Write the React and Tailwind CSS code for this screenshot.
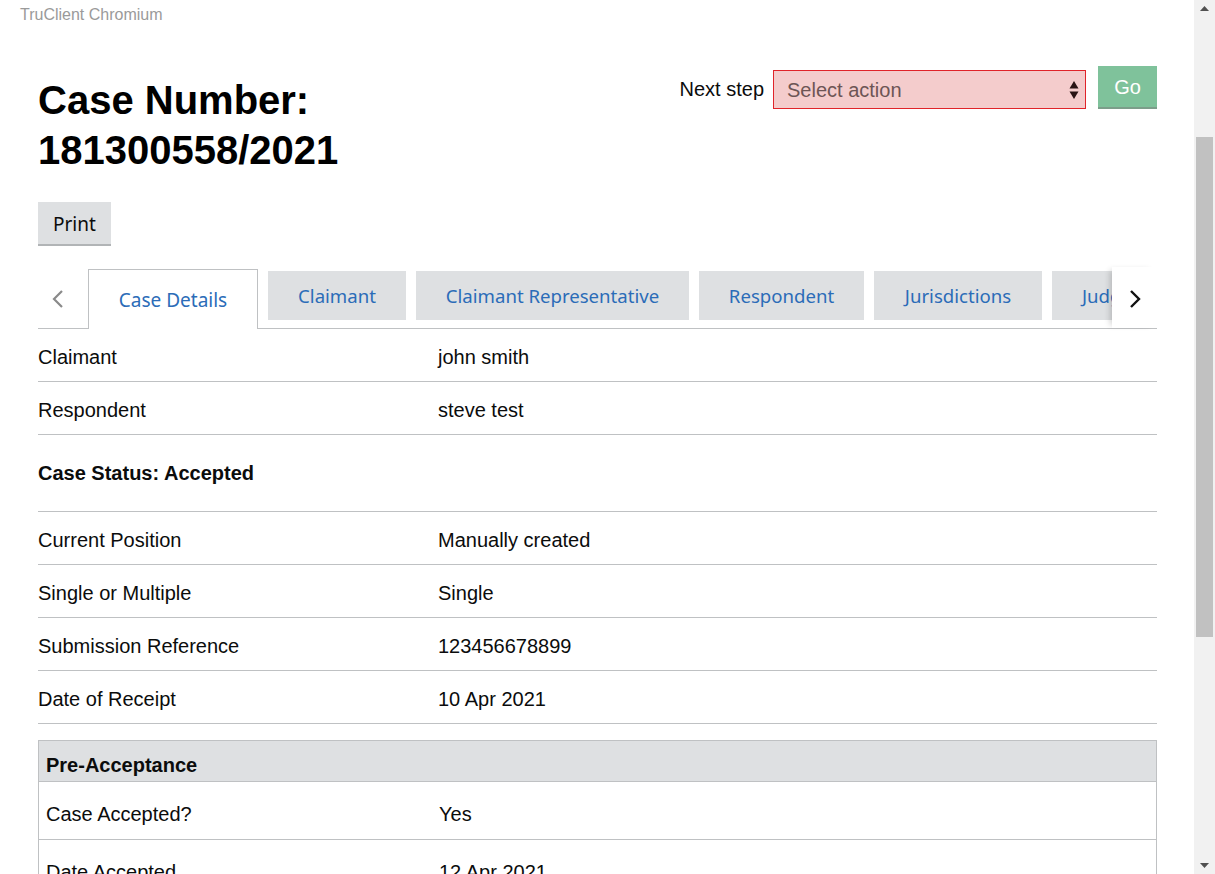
const detailRows = [
  ['Claimant', 'john smith'],
  ['Respondent', 'steve test'],
];

const positionRows = [
  ['Current Position', 'Manually created'],
  ['Single or Multiple', 'Single'],
  ['Submission Reference', '123456678899'],
  ['Date of Receipt', '10 Apr 2021'],
];

const tabs = [
  { name: 'Claimant', w: 'w-[138px] justify-center' },
  { name: 'Claimant Representative', w: 'w-[273px] justify-center' },
  { name: 'Respondent', w: 'w-[165px] justify-center' },
  { name: 'Jurisdictions', w: 'w-[168px] justify-center' },
  { name: 'Judgments', w: 'w-[150px] justify-start pl-[30px]' },
];

function Row({ label, value }) {
  return (
    <div className="grid grid-cols-[400px_1fr] h-[53px] pt-[4px] items-center border-b border-[#bfc1c3] text-[20px] leading-[23px] text-[#0b0c0c]">
      <div>{label}</div>
      <div>{value}</div>
    </div>
  );
}

export default function App() {
  return (
    <div className="h-[874px] w-[1215px] overflow-hidden flex bg-white font-['Liberation_Sans',Arial,sans-serif]">
      <div className="flex-1 min-w-0">
        {/* window title */}
        <div className="pl-[20px] pt-[5px] text-[16px] leading-[20px] text-[#9a9a9a]">TruClient Chromium</div>

        <div className="pl-[38px] pr-[37px]">
          {/* Header */}
          <div className="flex justify-between items-start pt-[41px]">
            <h1 className="mt-[9px] text-[40px] leading-[50px] font-bold text-black">
              Case Number:
              <br />
              181300558/2021
            </h1>

            <div className="flex items-start">
              <div className="mt-[4px] h-[38px] flex items-center text-[20px] text-[#0b0c0c]">Next step</div>
              <div className="ml-[9px] mt-[4px] w-[313px] h-[39px] flex items-center justify-between border border-[#e0242a] bg-[#f4cccc] pl-[13px] pr-[6px]">
                <span className="text-[20px] text-[#6d5555]">Select action</span>
                <svg width="10" height="20" viewBox="0 0 10 20">
                  <polygon points="5,1 9.5,8.5 0.5,8.5" fill="#2a1414" />
                  <polygon points="0.5,11.5 9.5,11.5 5,19" fill="#2a1414" />
                </svg>
              </div>
              <button className="ml-[12px] w-[59px] h-[43px] bg-[#7fc29b] border-b-2 border-[#7c9e8a] text-white text-[20px] flex items-center justify-center">
                Go
              </button>
            </div>
          </div>

          {/* Print */}
          <button className="mt-[27px] h-[44px] px-[15px] pt-[2px] bg-[#dee0e2] border-b-2 border-[#b1b4b6] text-[19px] text-[#0b0c0c] font-['Noto_Sans',sans-serif]">
            Print
          </button>

          {/* Tabs */}
          <div className="mt-[23px] h-[60px] flex shadow-[inset_0_-1px_0_#bfc1c3] font-['Noto_Sans',sans-serif]">
            <div className="w-[50px] h-[59px] flex items-center pl-[13px]">
              <svg width="14" height="20" viewBox="0 0 14 20">
                <polyline points="11,2 3,10 11,18" fill="none" stroke="#8a8a8a" strokeWidth="2.2" />
              </svg>
            </div>
            <div className="flex-1 min-w-0 overflow-hidden h-[60px]">
              <div className="flex items-start gap-[10px] w-max">
                <div className="h-[60px] w-[170px] bg-white border-t border-l border-r border-[#bfc1c3] flex items-center justify-center pt-[1px] text-[19px] text-[#2b6cb8]">
                  Case Details
                </div>
                {tabs.map((t) => (
                  <div
                    key={t.name}
                    className={`${t.w} mt-[2px] h-[49px] bg-[#dee0e2] flex items-center pt-[1px] text-[18.6px] text-[#2b6cb8] whitespace-nowrap`}
                  >
                    {t.name}
                  </div>
                ))}
              </div>
            </div>
            <div className="relative z-10 -mt-[2px] w-[45px] h-[61px] bg-white shadow-[-5px_0_6px_-3px_rgba(0,0,0,0.18)] flex items-center justify-center pt-[2px]">
              <svg width="14" height="20" viewBox="0 0 14 20">
                <polyline points="3,2 11,10 3,18" fill="none" stroke="#111" strokeWidth="2.4" />
              </svg>
            </div>
          </div>

          {/* Rows */}
          {detailRows.map(([l, v]) => (
            <Row key={l} label={l} value={v} />
          ))}
          <div className="h-[77px] flex items-center border-b border-[#bfc1c3] text-[20px] font-bold text-[#0b0c0c]">
            Case Status: Accepted
          </div>
          {positionRows.map(([l, v]) => (
            <Row key={l} label={l} value={v} />
          ))}

          {/* Pre-Acceptance */}
          <div className="mt-[16px] border border-[#bfc1c3]">
            <div className="h-[41px] pl-[7px] pt-[13px] leading-[23px] bg-[#dee0e2] border-b border-[#bfc1c3] text-[20px] font-bold text-[#0b0c0c]">
              Pre-Acceptance
            </div>
            <div className="grid grid-cols-[393px_1fr] pl-[7px] pt-[21px] pb-[13px] leading-[23px] border-b border-[#bfc1c3] text-[20px] text-[#0b0c0c]">
              <div>Case Accepted?</div>
              <div>Yes</div>
            </div>
            <div className="grid grid-cols-[393px_1fr] pl-[7px] pt-[21px] pb-[13px] leading-[23px] text-[20px] text-[#0b0c0c]">
              <div>Date Accepted</div>
              <div>12 Apr 2021</div>
            </div>
          </div>
        </div>
      </div>

      {/* scrollbar */}
      <div className="w-[21px] h-full bg-[#f1f1f1] flex flex-col items-center">
        <div className="h-[17px] flex items-center justify-center">
          <svg width="9" height="5" viewBox="0 0 9 5"><polygon points="4.5,0 9,5 0,5" fill="#505050" /></svg>
        </div>
        <div className="mt-[120px] w-[17px] h-[500px] bg-[#c1c1c1]" />
        <div className="flex-1" />
        <div className="h-[17px] flex items-center justify-center">
          <svg width="9" height="5" viewBox="0 0 9 5"><polygon points="0,0 9,0 4.5,5" fill="#505050" /></svg>
        </div>
      </div>
    </div>
  );
}
